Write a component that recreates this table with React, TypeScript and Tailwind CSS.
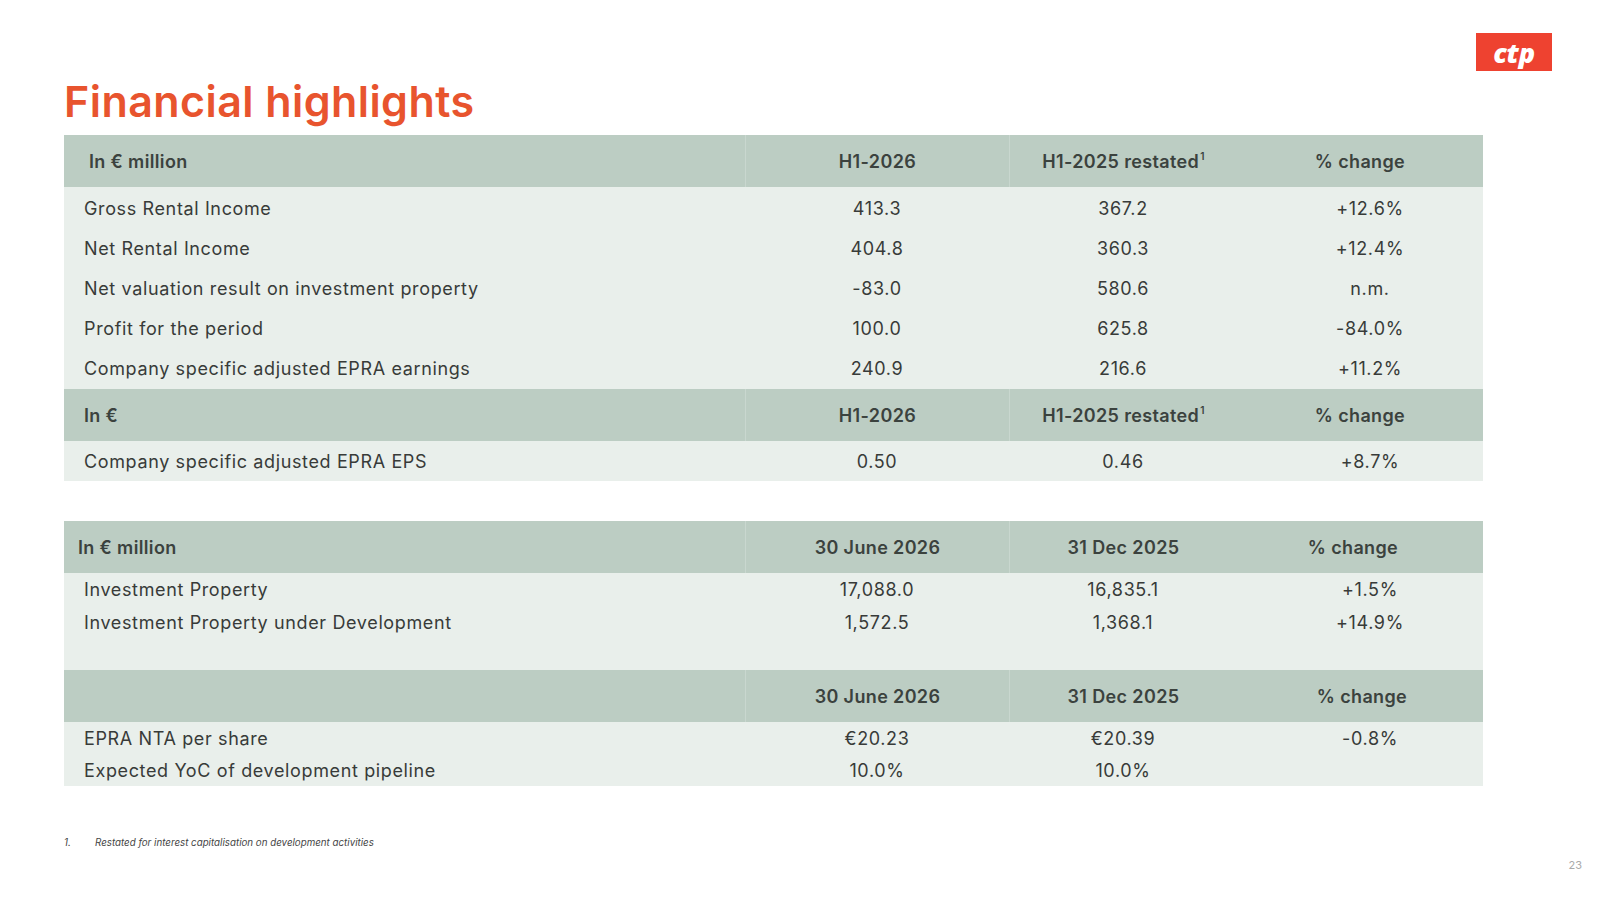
const FONT = "font-['Inter','Liberation_Sans',sans-serif]"

type Row = { label: string; a: string; b: string; c: string }

const incomeRows: Row[] = [
  { label: 'Gross Rental Income', a: '413.3', b: '367.2', c: '+12.6%' },
  { label: 'Net Rental Income', a: '404.8', b: '360.3', c: '+12.4%' },
  { label: 'Net valuation result on investment property', a: '-83.0', b: '580.6', c: 'n.m.' },
  { label: 'Profit for the period', a: '100.0', b: '625.8', c: '-84.0%' },
  { label: 'Company specific adjusted EPRA earnings', a: '240.9', b: '216.6', c: '+11.2%' },
]

const propertyRows: Row[] = [
  { label: 'Investment Property', a: '17,088.0', b: '16,835.1', c: '+1.5%' },
  { label: 'Investment Property under Development', a: '1,572.5', b: '1,368.1', c: '+14.9%' },
]

const ntaRows: Row[] = [
  { label: 'EPRA NTA per share', a: '€20.23', b: '€20.39', c: '-0.8%' },
  { label: 'Expected YoC of development pipeline', a: '10.0%', b: '10.0%', c: '' },
]

const COLS = 'grid grid-cols-[681px_264px_228px_246px]'

function HeaderRow({ label, a, b, c, labelPad = 'pl-[25px]', cPad = 'pr-0', superB = false }: {
  label: string
  a: string
  b: string
  c: string
  labelPad?: string
  cPad?: string
  superB?: boolean
}) {
  return (
    <div className={`${COLS} h-[52px] bg-[#bccdc3] text-[18px] font-semibold tracking-[0.02em] text-[#3b423e]`}>
      <div className={`flex items-center ${labelPad}`}>{label}</div>
      <div className="flex items-center justify-center border-l border-[#c9d7cf]">{a}</div>
      <div className="flex items-center justify-center border-l border-[#c9d7cf]">
        {b}
        {superB && <sup className="ml-px text-[10px]">1</sup>}
      </div>
      <div className={`flex items-center justify-center ${cPad}`}>{c}</div>
    </div>
  )
}

function BodyRow({ row, h }: { row: Row; h: string }) {
  return (
    <div className={`${COLS} ${h} text-[18px] tracking-[0.035em] text-[#383b39]`}>
      <div className="flex items-center pl-[20px]">{row.label}</div>
      <div className="flex items-center justify-center">{row.a}</div>
      <div className="flex items-center justify-center">{row.b}</div>
      <div className="flex items-center justify-center pl-[20px]">{row.c}</div>
    </div>
  )
}

function Logo() {
  return (
    <div className="flex h-[38px] w-[76px] items-center justify-center bg-[#ee4230]">
      <span className="font-['Open_Sans','Liberation_Sans',sans-serif] text-[27px] font-extrabold italic leading-none tracking-[-0.01em] text-white">
        ctp
      </span>
    </div>
  )
}

export default function App() {
  return (
    <div className={`relative h-[903px] w-[1616px] overflow-hidden bg-white ${FONT}`}>
      <div className="flex justify-end pr-[64px] pt-[33px]">
        <Logo />
      </div>

      <div className="px-[64px]">
        <h1 className="-mt-[2px] mb-[2px] text-[43px] font-semibold leading-[64px] tracking-[0.01em] text-[#e8542e]">
          Financial highlights
        </h1>

        {/* table 1: income */}
        <div className="w-[1419px]">
          <HeaderRow label="In € million" a="H1-2026" b="H1-2025 restated" c="% change" superB />
          <div className="bg-[#e9efeb] py-px">
            {incomeRows.map((r) => (
              <BodyRow key={r.label} row={r} h="h-[40px]" />
            ))}
          </div>
          <HeaderRow label="In €" labelPad="pl-[20px]" a="H1-2026" b="H1-2025 restated" c="% change" superB />
          <div className="bg-[#e9efeb]">
            <BodyRow row={{ label: 'Company specific adjusted EPRA EPS', a: '0.50', b: '0.46', c: '+8.7%' }} h="h-[40px]" />
          </div>
        </div>

        {/* table 2: balance sheet */}
        <div className="mt-[40px] w-[1419px]">
          <HeaderRow label="In € million" labelPad="pl-[14px]" cPad="pr-[14px]" a="30 June 2026" b="31 Dec 2025" c="% change" />
          <div className="bg-[#e9efeb] pb-[31px]">
            {propertyRows.map((r) => (
              <BodyRow key={r.label} row={r} h="h-[33px]" />
            ))}
          </div>
          <HeaderRow label="" cPad="pl-[4px]" a="30 June 2026" b="31 Dec 2025" c="% change" />
          <div className="bg-[#e9efeb]">
            {ntaRows.map((r) => (
              <BodyRow key={r.label} row={r} h="h-[32px]" />
            ))}
          </div>
        </div>

        <div className="mt-[50px] flex text-[9.75px] italic text-[#444]">
          <span className="w-[31px]">1.</span>
          <span>Restated for interest capitalisation on development activities</span>
        </div>
      </div>

      <div className="flex justify-end pr-[34px] pt-[6px] text-[11px] text-[#aaa]">23</div>
    </div>
  )
}
